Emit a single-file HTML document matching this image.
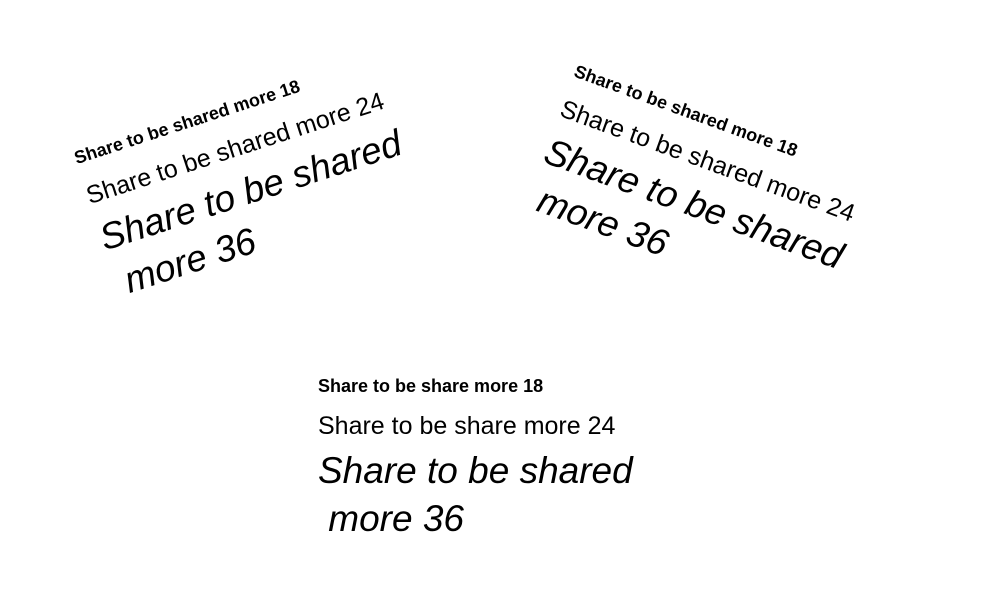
<!DOCTYPE html>
<html><head><meta charset="utf-8"><style>
html,body{margin:0;padding:0;background:#fff;width:991px;height:599px;overflow:hidden}
.b{position:absolute;transform-origin:0 0;width:400px;height:200px}
.b div{position:absolute;left:0;white-space:pre;line-height:1;font-family:"Liberation Sans",sans-serif;color:#000}
.l1{top:0;font-size:18px;font-weight:bold}
.l2{top:37px;font-size:25px}
.l3{top:75px;font-size:37px;font-style:italic}
.l4{top:123px;font-size:37px;font-style:italic}
</style></head><body>
<div class="b" style="left:72px;top:150px;transform:rotate(-18deg)">
<div class="l1">Share to be shared more 18</div>
<div class="l2">Share to be shared more 24</div>
<div class="l3">Share to be shared</div>
<div class="l4"> more 36</div>
</div>
<div class="b" style="left:578px;top:62px;transform:rotate(20deg)">
<div class="l1">Share to be shared more 18</div>
<div class="l2">Share to be shared more 24</div>
<div class="l3">Share to be shared</div>
<div class="l4"> more 36</div>
</div>
<div class="b" style="left:318px;top:377px">
<div class="l1">Share to be share more 18</div>
<div class="l2">Share to be share more 24</div>
<div class="l3">Share to be shared</div>
<div class="l4"> more 36</div>
</div>
</body></html>
